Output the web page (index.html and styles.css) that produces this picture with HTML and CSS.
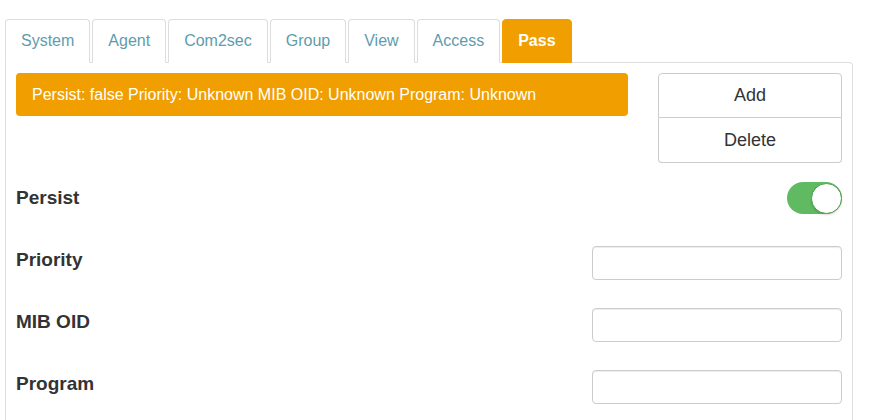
FILE: index.html
```html
<!DOCTYPE html>
<html>
<head>
<meta charset="utf-8">
<link rel="stylesheet" href="styles.css">
</head>
<body>
<div class="wrap">
  <ul class="tabs">
    <li class="tab">System</li>
    <li class="tab">Agent</li>
    <li class="tab">Com2sec</li>
    <li class="tab">Group</li>
    <li class="tab">View</li>
    <li class="tab">Access</li>
    <li class="tab active">Pass</li>
  </ul>
  <div class="panel">
    <div class="top">
      <div class="alert">Persist: false Priority: Unknown MIB OID: Unknown Program: Unknown</div>
      <div class="btn-group">
        <button class="btn">Add</button>
        <button class="btn">Delete</button>
      </div>
    </div>
    <div class="row row-persist">
      <label class="lbl">Persist</label>
      <span class="toggle"><span class="knob"></span></span>
    </div>
    <div class="row row-input">
      <label class="lbl">Priority</label>
      <input class="field" type="text">
    </div>
    <div class="row row-input">
      <label class="lbl">MIB OID</label>
      <input class="field" type="text">
    </div>
    <div class="row row-input">
      <label class="lbl">Program</label>
      <input class="field" type="text">
    </div>
  </div>
</div>
</body>
</html>
```
FILE: styles.css
```css
* { box-sizing: border-box; }
html, body { margin: 0; padding: 0; background: #fff; }
body {
  font-family: "Liberation Sans", Arial, sans-serif;
  font-size: 16px;
  color: #333;
  overflow: hidden;
}
.wrap {
  padding: 19px 17px 0 5px;
}
.tabs {
  list-style: none;
  margin: 0;
  padding: 0;
  display: flex;
  gap: 2px;
  position: relative;
  z-index: 1;
}
.tab {
  height: 44px;
  padding: 0 15px;
  line-height: 42px;
  border: 1px solid #ddd;
  border-bottom-color: transparent;
  border-radius: 4px 4px 0 0;
  color: #5e9cae;
  background: #fff;
}
.tab.active {
  background: #f09e00;
  border-color: #f09e00;
  color: #fff;
  font-weight: bold;
}
.panel {
  margin-top: -1px;
  border: 1px solid #ddd;
  border-bottom: none;
  border-radius: 0 4px 0 0;
  padding: 10px 10px 0 10px;
  height: 358px;
}
.top {
  display: flex;
  align-items: flex-start;
  gap: 30px;
}
.alert {
  flex: 1;
  height: 43px;
  line-height: 43px;
  padding: 0 16px;
  background: #f09e00;
  color: #fff;
  border-radius: 4px;
  white-space: nowrap;
}
.btn-group {
  width: 184px;
  display: flex;
  flex-direction: column;
}
.btn {
  font-family: inherit;
  font-size: 18px;
  color: #333;
  background: #fff;
  border: 1px solid #ccc;
  height: 45px;
  padding: 0;
  margin: 0;
}
.btn:first-child {
  border-radius: 4px 4px 0 0;
}
.btn:last-child {
  border-radius: 0 0 4px 4px;
  border-top: none;
  height: 45px;
}
.row {
  display: flex;
  justify-content: space-between;
  align-items: center;
}
.lbl {
  font-weight: bold;
  font-size: 19px;
  line-height: 22px;
  color: #333;
}
.row-persist {
  margin-top: 19px;
  height: 32px;
}
.row-persist .lbl {
  margin-bottom: 1px;
}
.row-input {
  height: 34px;
  margin-top: 28px;
}
.row-persist + .row-input {
  margin-top: 32px;
}
.row-input .lbl {
  margin-bottom: 7px;
}
.field {
  width: 250px;
  height: 34px;
  border: 1px solid #ccc;
  border-radius: 4px;
  box-shadow: inset 0 1px 1px rgba(0,0,0,0.075);
  padding: 6px 12px;
  font-size: 14px;
}
.toggle {
  position: relative;
  display: block;
  width: 55px;
  height: 32px;
  border-radius: 16px;
  background: #5fba62;
}
.knob {
  position: absolute;
  right: 0;
  top: 1px;
  width: 31px;
  height: 31px;
  border-radius: 50%;
  background: #fff;
  border: 1px solid #4fa052;
  box-shadow: 0 1px 2px rgba(0,0,0,0.15);
}
```
